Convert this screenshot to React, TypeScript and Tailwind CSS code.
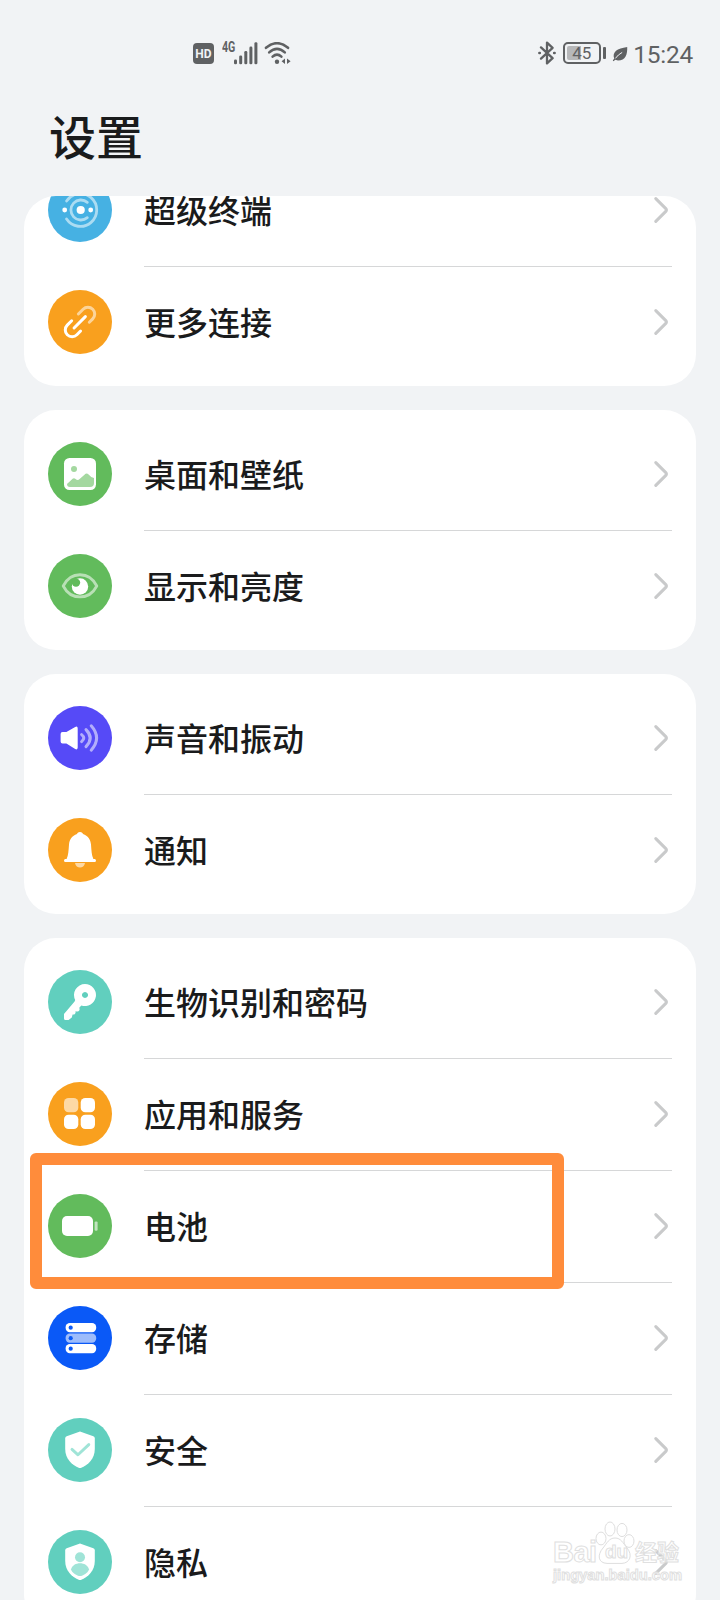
import type { ReactNode } from 'react';
import { clsx } from 'clsx';

interface SettingItem {
  label: string;
  color: string;
  icon: ReactNode;
}

const SHIELD = 'M32 13.6 L45.3 18.2 Q46.8 18.8 46.8 20.4 V31 C46.8 41 40 47 33.4 49.7 Q32 50.2 30.6 49.7 C24 47 17.2 41 17.2 31 V20.4 Q17.2 18.8 18.7 18.2 Z';

const SuperDeviceIcon = () => (
  <>
    <g fill="none" stroke="#fff" strokeOpacity="0.55" strokeWidth="2.8" strokeLinecap="round">
      <path d="M18.6 23 A16.4 16.4 0 1 1 18.6 41" />
      <path d="M39.3 24.3 A10 10 0 1 0 39.3 39.7" />
    </g>
    <circle cx="32.7" cy="32" r="4.1" fill="#fff" />
    <circle cx="16.7" cy="32" r="2.4" fill="#fff" />
    <circle cx="42.7" cy="32" r="2.4" fill="#fff" />
  </>
);

const LinkIcon = () => (
  <g fill="none" stroke="#fff" strokeWidth="3" strokeLinecap="round" transform="translate(32 32) rotate(-45)">
    <path d="M4.5 -6.8 H11.2 A6.8 6.8 0 0 1 11.2 6.8 H6.4" strokeOpacity="0.55" />
    <path d="M-5 -6.8 H-11.2 A6.8 6.8 0 0 0 -11.2 6.8 H-6" />
    <path d="M-8.4 0 H7.6" />
  </g>
);

const PictureIcon = () => (
  <>
    <rect x="16" y="16" width="32" height="32" rx="5.5" fill="#fff" />
    <circle cx="26" cy="27" r="3" fill="#a4d8a0" />
    <path d="M19 42 L24.6 36.8 Q26 35.6 27.6 37 Q29.6 39.2 31.6 37 L37.6 31.8 Q39 30.8 40.6 32.4 Q43.4 35.8 46 36 V41 Q46 45 42 45 H22 Q19 45 19 42 Z" fill="#a4d8a0" />
  </>
);

const EyeIcon = () => (
  <>
    <path d="M15.2 32 C22.8 17 41.2 17 48.8 32 C41.2 46.6 22.8 46.6 15.2 32 Z" fill="none" stroke="#fff" strokeOpacity="0.55" strokeWidth="2.8" strokeLinejoin="round" />
    <circle cx="32" cy="32.5" r="8.2" fill="#fff" />
    <circle cx="28" cy="28.6" r="4.2" fill="#62bb5c" />
  </>
);

const SoundIcon = () => (
  <>
    <path d="M14.5 26 H18.4 L27.2 20.9 Q29.7 19.8 29.7 22.4 V41.6 Q29.7 44.2 27.2 43.1 L18.4 37.6 H14.5 Q12.6 37.6 12.6 35.6 V28 Q12.6 26 14.5 26 Z" fill="#fff" />
    <g fill="none" stroke="#fff" strokeOpacity="0.55" strokeWidth="3" strokeLinecap="round">
      <path d="M33.6 28.6 Q38 32 33.6 35.6" />
      <path d="M38 23.6 Q46.4 32 38 40.6" />
      <path d="M43.2 19.8 Q54 32 43.2 44.2" />
    </g>
  </>
);

const BellIcon = () => (
  <>
    <path d="M32 14 C34 14 34.6 15 35 16 C40 17.6 42.6 21.6 43 26.6 C43.5 33 43.6 37.6 45.4 41 H46.6 Q48 41 48 42.5 Q48 44 46.6 44 H17.4 Q16 44 16 42.5 Q16 41 17.4 41 H18.6 C20.4 37.6 20.5 33 21 26.6 C21.4 21.6 24 17.6 29 16 C29.4 15 30 14 32 14 Z" fill="#fff" />
    <path d="M27 45 H37 C36 51 28 51 27 45 Z" fill="#fff" fillOpacity="0.6" />
  </>
);

const KeyIcon = () => (
  <path
    fill="#fff"
    fillRule="evenodd"
    d="M37 14 a11 11 0 1 1 -3.6 21.4 L31.4 37.6 L31.6 40 Q30 42.4 27.6 41 Q28 44.8 24.6 44.6 L23.8 47.4 L20.6 50 H17.6 Q16 50 16 48.4 V44 L26.6 31.6 L27.2 30 A11 11 0 0 1 37 14 Z M37 22 a3 3 0 1 0 0.01 0 Z"
  />
);

const AppsIcon = () => (
  <g fill="#fff">
    <rect x="16" y="16" width="14.3" height="14.3" rx="4.6" fillOpacity="0.6" />
    <rect x="32.7" y="16" width="14.3" height="14.3" rx="4.6" />
    <rect x="16" y="32.7" width="14.3" height="14.3" rx="4.6" />
    <rect x="32.7" y="32.7" width="14.3" height="14.3" rx="4.6" />
  </g>
);

const BatteryIcon = () => (
  <g fill="#fff">
    <rect x="14" y="22" width="31" height="20" rx="5" />
    <rect x="46.6" y="27.4" width="3" height="9.4" rx="1.2" fillOpacity="0.6" />
  </g>
);

const StorageIcon = () => (
  <>
    <rect x="17.6" y="17" width="30.6" height="9.2" rx="4.2" fill="#fff" />
    <rect x="17.6" y="27.6" width="30.6" height="9.2" rx="4.2" fill="#9dbcfb" />
    <rect x="17.6" y="38.1" width="30.6" height="9.2" rx="4.2" fill="#fff" />
    <g fill="#0a59f7">
      <circle cx="22.7" cy="21.7" r="2.1" />
      <circle cx="22.7" cy="32.2" r="2.1" />
      <circle cx="22.7" cy="42.7" r="2.1" />
    </g>
  </>
);

const SecurityIcon = () => (
  <>
    <path d={SHIELD} fill="#fff" />
    <path d="M24 31.4 L30 36.8 L40.8 26.6" fill="none" stroke="#a0e4d7" strokeWidth="2.9" strokeLinecap="round" strokeLinejoin="round" />
  </>
);

const PrivacyIcon = () => (
  <>
    <path d={SHIELD} fill="#fff" />
    <circle cx="32" cy="27.2" r="5" fill="#a0e4d7" />
    <path d="M23 39.4 C25 31.2 39 31.2 41 39.4 C40 42.6 35 46 32 46 C29 46 24 42.6 23 39.4 Z" fill="#a0e4d7" />
  </>
);

const groups: SettingItem[][] = [
  [
    { label: '超级终端', color: 'bg-[#46b1e3]', icon: <SuperDeviceIcon /> },
    { label: '更多连接', color: 'bg-[#f9a01e]', icon: <LinkIcon /> },
  ],
  [
    { label: '桌面和壁纸', color: 'bg-[#62bb5c]', icon: <PictureIcon /> },
    { label: '显示和亮度', color: 'bg-[#62bb5c]', icon: <EyeIcon /> },
  ],
  [
    { label: '声音和振动', color: 'bg-[#564af7]', icon: <SoundIcon /> },
    { label: '通知', color: 'bg-[#f9a01e]', icon: <BellIcon /> },
  ],
  [
    { label: '生物识别和密码', color: 'bg-[#61cfbe]', icon: <KeyIcon /> },
    { label: '应用和服务', color: 'bg-[#f9a01e]', icon: <AppsIcon /> },
    { label: '电池', color: 'bg-[#62bb5c]', icon: <BatteryIcon /> },
    { label: '存储', color: 'bg-[#0a59f7]', icon: <StorageIcon /> },
    { label: '安全', color: 'bg-[#61cfbe]', icon: <SecurityIcon /> },
    { label: '隐私', color: 'bg-[#61cfbe]', icon: <PrivacyIcon /> },
  ],
];

const StatusBar = () => (
  <div className="flex h-[66px] shrink-0 items-end pl-[193px] pr-[27px] pb-px font-[Roboto,sans-serif] text-[#5f6163]">
    <div className="mb-px flex h-[21px] w-[21px] items-center justify-center rounded-[4px] bg-[#5f6163] text-[12px] font-bold leading-none text-[#f1f3f5]">
      HD
    </div>
    <div className="ml-[8px] h-[23px] w-[13px]">
      <span className="inline-block origin-left scale-x-[0.76] align-top text-[14px] font-bold leading-[11px]">4G</span>
    </div>
    <svg className="-ml-px h-[23px] w-[24px]" viewBox="0 0 24 23" fill="currentColor">
      <rect x="0" y="17.5" width="3" height="4.7" rx="1.3" />
      <rect x="5.2" y="13.4" width="3" height="8.8" rx="1.3" />
      <rect x="10.3" y="9" width="3" height="13.2" rx="1.3" />
      <rect x="15.4" y="4.6" width="3" height="17.6" rx="1.3" />
      <rect x="20.4" y="0.3" width="3" height="21.9" rx="1.3" />
    </svg>
    <svg className="ml-[6px] h-[23px] w-[28px]" viewBox="0 0 28 23" fill="none" stroke="currentColor" strokeLinecap="round">
      <path d="M2 5.8 Q13 -3.4 24 5.8" strokeWidth="2.6" />
      <path d="M5.2 10.4 Q13 3.4 20.8 10.4" strokeWidth="2.6" />
      <path d="M8.6 14.6 Q13 10.6 17.4 14.6" strokeWidth="2.6" />
      <circle cx="13" cy="19.7" r="2.2" fill="currentColor" stroke="none" />
      <path d="M21 16.6 V22 L17.6 19.2 Z M23 16.6 V22 L26.6 19.2 Z" fill="currentColor" stroke="none" />
    </svg>
    <div className="ml-auto flex items-end">
      <svg className="h-[24px] w-[18px]" viewBox="0 0 18 24" fill="none" stroke="currentColor" strokeWidth="2.3" strokeLinecap="round" strokeLinejoin="round">
        <path d="M3 6.4 L14.6 17.2 L9 22.4 V1.6 L14.6 6.8 L3 17.6" />
        <path d="M1.4 12 H1.8 M16.2 12 H16.6" strokeWidth="2.6" />
      </svg>
      <div className="mb-px ml-[7px] flex h-[22px] w-[38px] items-center rounded-[5px] border-2 border-[#5f6163] p-[2px]">
        <div className="h-[14px] w-[14px] rounded-l-[2px] bg-[#b7b8ba]" />
        <span className="-ml-[9px] text-[17px] leading-none">45</span>
      </div>
      <div className="mb-[6px] ml-[2px] h-[12px] w-[3px] rounded-[1px] bg-[#5f6163]" />
      <svg className="mb-[3px] ml-[6px] h-[16px] w-[16px]" viewBox="0 0 16 16">
        <path d="M15.2 1 C15.6 8 13.6 14.6 6 14.6 L3.2 13.8 L1.6 15.2 L0.8 14.4 L2.2 12.6 C0 6 5 2.4 15.2 1 Z" fill="#5f6163" />
        <path d="M3.4 12.4 Q6 8.6 10.2 6.4" fill="none" stroke="#f1f3f5" strokeWidth="1" />
      </svg>
      <span className="ml-[5px] text-[24.4px] font-normal leading-[20px] tracking-[-0.2px]">15:24</span>
    </div>
  </div>
);

const SettingRow = ({ item, divider }: { item: SettingItem; divider: boolean }) => (
  <div className="flex h-[112px] shrink-0 px-6">
    <div className={clsx('mt-6 h-16 w-16 shrink-0 rounded-full', item.color)}>
      <svg className="h-16 w-16" viewBox="0 0 64 64">{item.icon}</svg>
    </div>
    <div className={clsx('ml-8 flex flex-1 items-center justify-between border-t pr-[3px]', divider ? 'border-[#d6d7d8]' : 'border-transparent')}>
      <span className="-mt-[3px] text-[32px] font-medium leading-[48px] text-[#1a1b1c]">{item.label}</span>
      <svg className="-mt-px h-[28px] w-[15px]" viewBox="0 0 15 28" fill="none" stroke="#c9cacb" strokeWidth="3" strokeLinecap="round" strokeLinejoin="round">
        <path d="M1.8 2.6 L11.8 12.6 Q13 14 11.8 15.4 L1.8 25.4" />
      </svg>
    </div>
  </div>
);

const Watermark = () => (
  <div className="absolute left-[553px] top-[1521px] w-[130px] font-['Liberation_Sans','Noto_Sans_CJK_SC',sans-serif] font-bold text-white/70 [-webkit-text-stroke:1px_#e0e0e0]">
    <div className="flex h-[44px] items-end">
      <span className="w-[42px] text-[29px] leading-[25px] tracking-[-0.5px]">Bai</span>
      <div className="relative h-[44px] w-[40px]">
        <svg className="h-[44px] w-[40px]" viewBox="0 0 40 44" fill="#fff" fillOpacity="0.7" stroke="#dedede" strokeWidth="1">
          <ellipse cx="6" cy="17.5" rx="5" ry="6.4" />
          <ellipse cx="15" cy="8" rx="5" ry="7" />
          <ellipse cx="27" cy="9" rx="5" ry="6.6" />
          <ellipse cx="34" cy="20" rx="5" ry="6.4" />
          <path d="M20 17 C26 17 28 22 32 27 C38 34 35 42 27 42.4 H12 C3 42 2 34 8 27 C12 22 14 17 20 17 Z" />
        </svg>
        <span className="absolute left-[10px] top-[20px] text-[19px] leading-[21px]">du</span>
      </div>
      <span className="text-[22px] leading-[24px]">经验</span>
    </div>
    <div className="mt-px text-[14.7px] leading-[18px]">jingyan.baidu.com</div>
  </div>
);

export default function App() {
  return (
    <div className="relative flex h-[1600px] w-[720px] flex-col overflow-hidden bg-[#f1f3f5] font-['Noto_Sans_CJK_SC',sans-serif]">
      <StatusBar />
      <h1 className="mb-[25px] mt-[33px] shrink-0 pl-[49px] text-[47px] font-medium leading-[72px] text-[#1a1b1c]">设置</h1>
      <div className="flex flex-col gap-6 px-6">
        {groups.map((items, index) => (
          <div key={items[0].label} className={clsx('flex shrink-0 flex-col overflow-hidden rounded-[32px] bg-white pb-2', index > 0 && 'pt-2')}>
            {/* the list is scrolled, so the first card starts part way through its first row */}
            <div className={clsx(index === 0 && '-mt-[42px]')}>
              {items.map((item, i) => (
                <SettingRow key={item.label} item={item} divider={i > 0} />
              ))}
            </div>
          </div>
        ))}
      </div>
      <div className="absolute left-[30px] top-[1153px] h-[136px] w-[534px] rounded-[6px] border-12 border-[#ff8c3b]" />
      <Watermark />
    </div>
  );
}
